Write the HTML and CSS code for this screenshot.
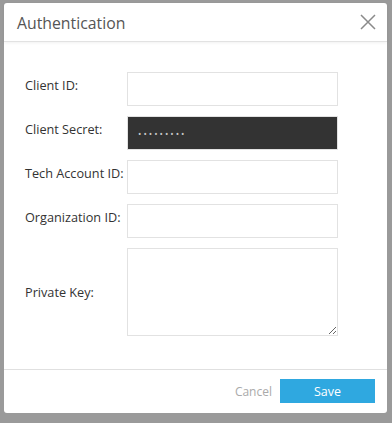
FILE: index.html
```html
<!DOCTYPE html>
<html lang="en">
<head>
  <meta charset="UTF-8">
  <meta name="viewport" content="width=device-width, initial-scale=1.0">
  <title>Authentication</title>
  <link rel="stylesheet" href="styles.css">
</head>
<body>
  <div class="dialog">
    <div class="dialog-header">
      <span class="dialog-title">Authentication</span>
      <button class="close" aria-label="Close">
        <svg width="16" height="16" viewBox="0 0 16 16">
          <path d="M1 1 L15 15 M15 1 L1 15" stroke="#8a8a8a" stroke-width="1.5" fill="none"/>
        </svg>
      </button>
    </div>

    <div class="dialog-body">
      <div class="row">
        <label for="clientId">Client ID:</label>
        <input class="field" type="text" id="clientId">
      </div>
      <div class="row">
        <label for="clientSecret">Client Secret:</label>
        <input class="field secret" type="password" id="clientSecret" value="secret123">
      </div>
      <div class="row">
        <label for="techAccount">Tech Account ID:</label>
        <input class="field" type="text" id="techAccount">
      </div>
      <div class="row">
        <label for="orgId">Organization ID:</label>
        <input class="field" type="text" id="orgId">
      </div>
      <div class="row">
        <label for="privateKey">Private Key:</label>
        <textarea class="field area" id="privateKey"></textarea>
      </div>
    </div>

    <div class="dialog-footer">
      <button class="btn-cancel">Cancel</button>
      <button class="btn-save">Save</button>
    </div>
  </div>
</body>
</html>
```

FILE: styles.css
```css
body {
  margin: 0;
  padding: 3px 5px 0 4px;
  background: #9a9a9a;
  font-family: "Open Sans", "Liberation Sans", sans-serif;
  height: 423px;
  box-sizing: border-box;
  overflow: hidden;
}

.dialog {
  width: 383px;
  height: 410px;
  background: #fff;
  border-radius: 3px;
  display: flex;
  flex-direction: column;
}

.dialog-header {
  height: 38px;
  display: flex;
  align-items: center;
  justify-content: space-between;
  padding: 0 11px 0 13px;
  border-bottom: 1px solid #e2e2e2;
  box-shadow: 0 1px 3px rgba(0, 0, 0, 0.06);
}

.dialog-title {
  font-size: 15.8px;
  color: #555;
  margin-top: 2px;
}

.close {
  border: none;
  background: none;
  padding: 0;
  width: 16px;
  height: 16px;
  cursor: pointer;
}

.dialog-body {
  flex: 1;
  padding: 30px 0 0 21px;
  display: flex;
  flex-direction: column;
  gap: 10px;
}

.row {
  display: flex;
  align-items: center;
}

.row label {
  width: 102px;
  flex-shrink: 0;
  font-size: 12.7px;
  color: #333;
  margin-top: -8px;
  white-space: nowrap;
}

.field {
  width: 211px;
  height: 34px;
  box-sizing: border-box;
  border: 1px solid #e2e2e2;
  background: #fff;
  padding: 0 10px;
  margin: 0;
  outline: none;
  font-family: inherit;
}

.secret {
  background: #333;
  color: #c8c8c8;
  font-size: 9px;
  letter-spacing: 2px;
}

.area {
  height: 88px;
  resize: both;
}

.row:last-child label {
  margin-top: 0;
}

.dialog-footer {
  height: 44px;
  box-sizing: border-box;
  border-top: 1px solid #e0e0e0;
  display: flex;
  justify-content: flex-end;
  align-items: flex-start;
  padding: 9px 12px 0 0;
  gap: 8px;
}

.btn-cancel {
  border: none;
  background: none;
  font-family: inherit;
  font-size: 12px;
  color: #aaa;
  height: 24px;
  padding: 0;
  cursor: pointer;
}

.btn-save {
  width: 95px;
  height: 24px;
  border: none;
  background: #2fa8e0;
  color: #fff;
  font-family: inherit;
  font-size: 12.5px;
  cursor: pointer;
}
```
